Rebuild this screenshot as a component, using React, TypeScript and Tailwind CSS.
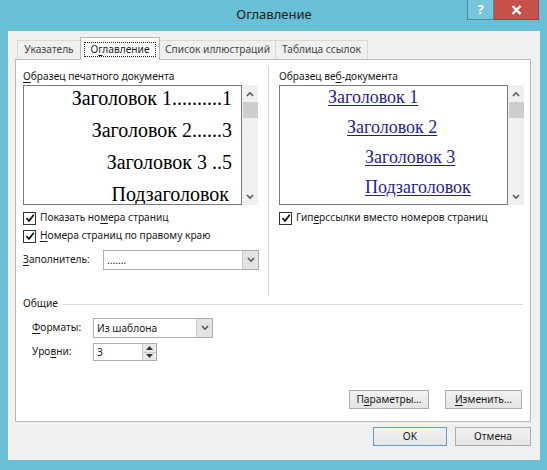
import React from "react";

const ui = { fontFamily: '"Noto Sans", "Open Sans", sans-serif' };
const serif = { fontFamily: '"Liberation Serif", "Times New Roman", serif' };

function U({ children }: { children: React.ReactNode }) {
  return <span className="underline underline-offset-2">{children}</span>;
}

function Check() {
  return (
    <div className="w-[13px] h-[13px] border border-[#333] bg-white flex items-center justify-center">
      <svg width="10" height="10" viewBox="0 0 10 10">
        <path d="M1.5 5.2 L4 7.8 L8.8 1.8" fill="none" stroke="#111" strokeWidth="1.8" />
      </svg>
    </div>
  );
}

function Chevron({ up = false, color = "#555" }: { up?: boolean; color?: string }) {
  return (
    <svg width="8" height="6" viewBox="0 0 8 6">
      <path d={up ? "M1 5 L4 1.8 L7 5" : "M1 1 L4 4.2 L7 1"} fill="none" stroke={color} strokeWidth="1.6" />
    </svg>
  );
}

function Scrollbar() {
  return (
    <div className="w-[16px] h-full bg-[#f0f0f0] flex flex-col items-center">
      <div className="h-[17px] flex items-center justify-center">
        <Chevron up />
      </div>
      <div className="w-[15px] h-[16px] bg-[#cdcdcd]" />
      <div className="flex-1" />
      <div className="h-[17px] flex items-center justify-center">
        <Chevron />
      </div>
    </div>
  );
}

function Select({ value, w }: { value: string; w: string }) {
  return (
    <div className={`${w} h-[20px] border border-[#acacac] bg-white flex items-center`}>
      <span className="flex-1 pl-[3px] leading-none">{value}</span>
      <div className="w-[16px] h-[18px] bg-[#e3e3e3] border-l border-[#c9c9c9] flex items-center justify-center">
        <Chevron />
      </div>
    </div>
  );
}

function Button({ children, w, def = false }: { children: React.ReactNode; w: string; def?: boolean }) {
  return (
    <div
      className={`${w} h-[19px] flex items-center justify-center border ${
        def ? "border-[#5b9fd6]" : "border-[#acacac]"
      } bg-gradient-to-b from-[#f2f2f2] to-[#e5e5e5] leading-none`}
    >
      {children}
    </div>
  );
}

export default function App() {
  return (
    <div
      className="w-[547px] h-[470px] bg-[#69bfd5] flex flex-col pl-[8px] pr-[7px] pb-[10px] text-[10.2px] text-[#1a1a1a]"
      style={ui}
    >
      {/* Title bar */}
      <div className="h-[31px] relative flex items-center justify-center">
        <span className="text-[13px] text-[#1b1b1b] -mt-[1px]">Оглавление</span>
        <div className="absolute top-0 right-[1px] flex">
          <div className="w-[27px] h-[20px] bg-[#76c5d9] border border-[#3f8ea4] border-t-0 flex items-center justify-center text-white text-[13px] font-bold leading-none">
            ?
          </div>
          <div className="w-[45px] h-[20px] bg-[#c7504b] border border-[#a33c38] border-t-0 border-l-0 flex items-center justify-center">
            <svg width="11" height="10" viewBox="0 0 11 10">
              <path d="M1.5 1 L9.5 9 M9.5 1 L1.5 9" stroke="#fff" strokeWidth="2.4" />
            </svg>
          </div>
        </div>
      </div>

      {/* Client area */}
      <div className="flex-1 bg-[#f0f0f0] flex flex-col">
        {/* Tabs */}
        <div className="flex items-end pt-[6px] pl-[9px] -mb-px">
          <div className="w-[64px] h-[19px] mb-px border border-b-0 border-[#d9d9d9] bg-[#f0f0f0] flex items-center justify-center text-[#444]">
            Указатель
          </div>
          <div className="w-[80px] h-[23px] -ml-px relative z-10 border border-b-0 border-[#b9b9b9] bg-white flex items-center justify-center pt-[1px]">
            <span className="border border-dotted border-[#222] px-[5px] leading-[13px]">
              О<U>г</U>лавление
            </span>
          </div>
          <div className="w-[117px] h-[19px] mb-px -ml-px border border-b-0 border-[#d9d9d9] bg-[#f0f0f0] flex items-center justify-center text-[#444]">
            Список иллюстраций
          </div>
          <div className="w-[93px] h-[19px] mb-px -ml-px border border-b-0 border-[#d9d9d9] bg-[#f0f0f0] flex items-center justify-center text-[#444]">
            Таблица ссылок
          </div>
        </div>

        {/* Tab panel */}
        <div className="ml-[7px] w-[516px] h-[363px] border border-[#b9b9b9] bg-white flex flex-col">
          <div className="h-[236px] flex">
            {/* Left column */}
            <div className="w-[252px] pl-[7px] pt-[8px] flex flex-col">
              <div className="h-[16px] leading-[16px]">
                <U>О</U>бразец печатного документа
              </div>
              <div className="mt-[1px] h-[120px] flex">
                <div
                  className="w-[219px] h-full border border-[#7a7a7a] bg-white flex flex-col items-end pr-[9px] gap-[8px] text-[20px] text-black leading-[24px] overflow-hidden"
                  style={serif}
                >
                  <div>Заголовок 1..........1</div>
                  <div>Заголовок 2......3</div>
                  <div>Заголовок 3 ..5</div>
                  <div className="pr-[3px]">Подзаголовок</div>
                </div>
                <Scrollbar />
              </div>
              <div className="mt-[4px] h-[18px] flex items-center gap-[4px]">
                <Check />
                <span>
                  Показать но<U>м</U>ера страниц
                </span>
              </div>
              <div className="h-[18px] flex items-center gap-[4px]">
                <Check />
                <span>
                  <U>Н</U>омера страниц по правому краю
                </span>
              </div>
              <div className="mt-[5px] flex items-center">
                <span className="w-[80px]">
                  <U>З</U>аполнитель:
                </span>
                <Select value="......." w="w-[156px]" />
              </div>
            </div>

            {/* Separator */}
            <div className="w-px mt-[6px] bg-[#d4d4d4]" />

            {/* Right column */}
            <div className="flex-1 pl-[10px] pt-[8px] flex flex-col">
              <div className="h-[16px] leading-[16px]">
                Образец ве<U>б</U>-документа
              </div>
              <div className="mt-[1px] h-[120px] flex">
                <div
                  className="w-[229px] h-full border border-[#7a7a7a] bg-white flex flex-col gap-[8px] text-[18px] text-[#1e1e9c] leading-[22px] overflow-hidden"
                  style={serif}
                >
                  <div className="pl-[48px]">
                    <span className="underline underline-offset-2">Заголовок 1</span>
                  </div>
                  <div className="pl-[67px]">
                    <span className="underline underline-offset-2">Заголовок 2</span>
                  </div>
                  <div className="pl-[85px]">
                    <span className="underline underline-offset-2">Заголовок 3</span>
                  </div>
                  <div className="pl-[85px]">
                    <span className="underline underline-offset-2">Подзаголовок</span>
                  </div>
                </div>
                <Scrollbar />
              </div>
              <div className="mt-[4px] h-[18px] flex items-center gap-[4px]">
                <Check />
                <span>
                  Гип<U>е</U>рссылки вместо номеров страниц
                </span>
              </div>
            </div>
          </div>

          {/* Общие */}
          <div className="h-[16px] flex items-center pl-[7px] pr-[7px]">
            <span>Общие</span>
            <div className="flex-1 h-px bg-[#dcdcdc] ml-[4px]" />
          </div>
          <div className="mt-[6px] flex items-center pl-[16px]">
            <span className="w-[61px]">
              <U>Ф</U>орматы:
            </span>
            <Select value="Из шаблона" w="w-[120px]" />
          </div>
          <div className="mt-[5px] flex items-center pl-[16px]">
            <span className="w-[61px]">
              Уро<U>в</U>ни:
            </span>
            <div className="w-[64px] h-[18px] border border-[#acacac] bg-white flex items-center">
              <span className="flex-1 pl-[3px] leading-none">3</span>
              <div className="w-[14px] h-full flex flex-col border-l border-[#c9c9c9]">
                <div className="flex-1 bg-[#e8e8e8] border-b border-[#c9c9c9] flex items-center justify-center">
                  <svg width="7" height="4" viewBox="0 0 7 4">
                    <path d="M0 4 L3.5 0 L7 4 Z" fill="#333" />
                  </svg>
                </div>
                <div className="flex-1 bg-[#e8e8e8] flex items-center justify-center">
                  <svg width="7" height="4" viewBox="0 0 7 4">
                    <path d="M0 0 L3.5 4 L7 0 Z" fill="#333" />
                  </svg>
                </div>
              </div>
            </div>
          </div>

          <div className="mt-auto mb-[12px] mr-[8px] flex justify-end gap-[16px]">
            <Button w="w-[80px]">
              П<U>а</U>раметры...
            </Button>
            <Button w="w-[77px]">
              <U>И</U>зменить...
            </Button>
          </div>
        </div>

        {/* Dialog buttons */}
        <div className="mt-[5px] mr-[9px] flex justify-end gap-[8px]">
          <Button w="w-[74px]" def>
            OK
          </Button>
          <Button w="w-[76px]">Отмена</Button>
        </div>
      </div>
    </div>
  );
}
